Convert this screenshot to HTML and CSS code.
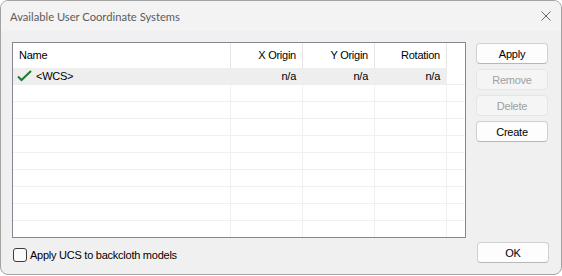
FILE: index.html
```html
<!DOCTYPE html>
<html lang="en">
<head>
    <meta charset="UTF-8">
    <title>Available User Coordinate Systems</title>
    <link rel="stylesheet" href="styles.css">
</head>
<body>

<div class="window">
    <!-- заголовок окна -->
    <div class="titlebar">
        <span class="title">Available User Coordinate Systems</span>
        <svg class="close" width="10" height="10" viewBox="0 0 10 10">
            <path d="M0.5 0.5 L9.5 9.5 M9.5 0.5 L0.5 9.5" stroke="#6a6a6a" stroke-width="1" fill="none"/>
        </svg>
    </div>

    <div class="body">
        <div class="main">
            <!-- список систем координат -->
            <div class="list">
                <div class="row head">
                    <div class="cell name">Name</div>
                    <div class="cell num">X Origin</div>
                    <div class="cell num">Y Origin</div>
                    <div class="cell num">Rotation</div>
                    <div class="cell fill"></div>
                </div>
                <div class="row sel">
                    <div class="cell name">
                        <svg class="tick" width="15" height="12" viewBox="0 0 15 12">
                            <path d="M1 6.5 L4.5 10 L14 1" stroke="#1d7a34" stroke-width="2" fill="none"/>
                        </svg>
                        <span class="label">&lt;WCS&gt;</span>
                    </div>
                    <div class="cell num">n/a</div>
                    <div class="cell num">n/a</div>
                    <div class="cell num">n/a</div>
                    <div class="cell fill"></div>
                </div>
                <div class="row"><div class="cell"></div><div class="cell"></div><div class="cell"></div><div class="cell"></div><div class="cell fill"></div></div>
                <div class="row"><div class="cell"></div><div class="cell"></div><div class="cell"></div><div class="cell"></div><div class="cell fill"></div></div>
                <div class="row"><div class="cell"></div><div class="cell"></div><div class="cell"></div><div class="cell"></div><div class="cell fill"></div></div>
                <div class="row"><div class="cell"></div><div class="cell"></div><div class="cell"></div><div class="cell"></div><div class="cell fill"></div></div>
                <div class="row"><div class="cell"></div><div class="cell"></div><div class="cell"></div><div class="cell"></div><div class="cell fill"></div></div>
                <div class="row"><div class="cell"></div><div class="cell"></div><div class="cell"></div><div class="cell"></div><div class="cell fill"></div></div>
                <div class="row"><div class="cell"></div><div class="cell"></div><div class="cell"></div><div class="cell"></div><div class="cell fill"></div></div>
                <div class="row"><div class="cell"></div><div class="cell"></div><div class="cell"></div><div class="cell"></div><div class="cell fill"></div></div>
                <div class="row"><div class="cell"></div><div class="cell"></div><div class="cell"></div><div class="cell"></div><div class="cell fill"></div></div>
            </div>

            <!-- кнопки справа -->
            <div class="buttons">
                <button class="btn">Apply</button>
                <button class="btn" disabled>Remove</button>
                <button class="btn" disabled>Delete</button>
                <button class="btn">Create</button>
            </div>
        </div>

        <div class="footer">
            <label class="check"><span class="box"></span>Apply UCS to backcloth models</label>
            <button class="btn">OK</button>
        </div>
    </div>
</div>

</body>
</html>
```

FILE: styles.css
```css
body {
    margin: 0;
    background: #ffffff;
    font-family: "Liberation Sans", Arial, sans-serif;
    font-size: 11px;
    letter-spacing: -0.25px;
    color: #000000;
}
.window {
    width: 562px;
    height: 275px;
    box-sizing: border-box;
    border: 1px solid #a3a3a3;
    border-radius: 8px;
    overflow: hidden;
    background: #f0f0f0;
}
.titlebar {
    height: 30px;
    background: #f3f3f3;
    display: flex;
    align-items: center;
    justify-content: space-between;
    padding: 0 10px 0 9px;
}
.title {
    font-family: Lato, sans-serif;
    font-size: 11.2px;
    letter-spacing: 0;
    color: #5c5c5c;
}
.close {
    margin-top: -1px;
}
.body {
    padding: 11px 0 0 11px;
}
.main {
    display: flex;
    gap: 10px;
}
.list {
    width: 454px;
    height: 196px;
    box-sizing: border-box;
    border: 1px solid #828790;
    background: #ffffff;
    overflow: hidden;
}
.row {
    display: grid;
    grid-template-columns: 218px 72px 72px 72px 1fr;
    height: 17px;
}
.cell {
    box-sizing: border-box;
    border-right: 1px solid #f0f0f0;
    border-bottom: 1px solid #f0f0f0;
    padding: 0 6px;
    line-height: 16px;
    white-space: nowrap;
}
.cell.fill {
    border-right: none;
}
.head {
    height: 25px;
}
.head .cell {
    line-height: 25px;
    border-bottom: none;
    border-right-color: #e5e5e5;
}
.head .name {
    padding-left: 6px;
}
.num {
    text-align: right;
}
.sel .cell {
    background: #eeeeee;
    border-right-color: #eeeeee;
    border-bottom-color: #eeeeee;
}
.sel .cell.fill {
    background: #ffffff;
}
.sel .name {
    display: flex;
    align-items: center;
    padding-left: 4px;
}
.tick {
    margin-right: 4px;
}
.buttons {
    display: flex;
    flex-direction: column;
    gap: 5px;
    margin-top: 1px;
}
.btn {
    width: 72px;
    height: 21px;
    box-sizing: border-box;
    border: 1px solid #d0d0d0;
    border-bottom-color: #b8b8b8;
    border-radius: 4px;
    background: #fdfdfd;
    font-family: "Liberation Sans", Arial, sans-serif;
    font-size: 11px;
    letter-spacing: -0.25px;
    color: #000000;
    padding: 0;
}
.btn:disabled {
    background: #f5f5f5;
    border-color: #e5e5e5;
    color: #a0a0a0;
}
.footer {
    display: flex;
    justify-content: space-between;
    align-items: flex-start;
    width: 537px;
    margin-top: 4px;
}
.check {
    display: flex;
    align-items: center;
    margin-top: 6px;
    margin-left: 1px;
}
.box {
    width: 12px;
    height: 12px;
    border: 1px solid #3c3c3c;
    border-radius: 3px;
    background: #fafafa;
    margin-right: 3px;
}
```
